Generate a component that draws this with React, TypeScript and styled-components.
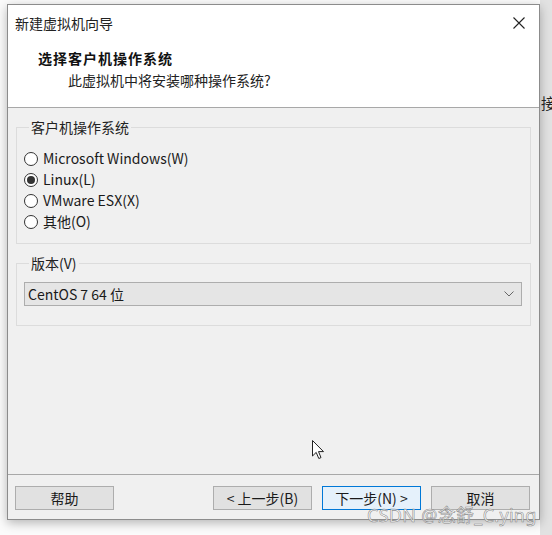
import React from "react";
import styled, { createGlobalStyle } from "styled-components";

const Global = createGlobalStyle`
  html, body { margin: 0; padding: 0; background: #fbfbfb; }
  body { font-family: "Noto Sans CJK SC", "Noto Sans", sans-serif; font-size: 14px; color: #1a1a1a; }
  * { box-sizing: border-box; }
`;

const Page = styled.div`
  position: relative;
  width: 552px;
  height: 535px;
  padding: 4px 0 0 7px;
  overflow: hidden;
  background: linear-gradient(to right, #fbfbfb 0, #fbfbfb 540px, #e2e2e2 540px);
`;

const Dialog = styled.div`
  width: 533px;
  height: 516px;
  display: flex;
  flex-direction: column;
  background: #f0f0f0;
  border: 1px solid #8c8c8c;
  box-shadow: 0 3px 10px rgba(0, 0, 0, 0.28);
`;

const TitleBar = styled.div`
  height: 36px;
  display: flex;
  align-items: center;
  justify-content: space-between;
  padding: 0 8px 0 7px;
  background: #fff;
  font-size: 14px;
  line-height: 18px;
  color: #222;
`;

const CloseBtn = styled.div`
  width: 24px;
  height: 24px;
  display: flex;
  align-items: center;
  justify-content: center;
`;

const Header = styled.div`
  background: #fff;
  padding: 7px 0 17px 30px;
  border-bottom: 1px solid #a8a8a8;
  display: flex;
  flex-direction: column;
  gap: 2px;
`;

const Heading = styled.div`
  font-weight: 700;
  font-size: 14px;
  line-height: 20px;
  letter-spacing: 1px;
  color: #111;
`;

const SubHeading = styled.div`
  padding-left: 30px;
  font-size: 14px;
  line-height: 20px;
  color: #222;
`;

const Body = styled.div`
  flex: 1;
  padding: 10px 8px 0 8px;
  display: flex;
  flex-direction: column;
  gap: 10px;
`;

const Group = styled.fieldset<{ $pb: number }>`
  margin: 0;
  padding: 0 8px ${(p) => p.$pb}px 7px;
  border: 1px solid #dcdcdc;
  min-width: 0;
`;

const Legend = styled.legend`
  padding: 0 2px;
  margin-left: 5px;
  font-size: 14px;
  line-height: 18px;
  color: #222;
`;

const RadioList = styled.div`
  padding-top: 12px;
  display: flex;
  flex-direction: column;
`;

const RadioRow = styled.label`
  height: 21px;
  display: flex;
  align-items: center;
  gap: 5px;
  font-size: 14px;
  line-height: 21px;
  color: #1a1a1a;
`;

const RadioDot = styled.span<{ $on: boolean }>`
  width: 14px;
  height: 14px;
  border-radius: 50%;
  border: 1px solid #333;
  background: #fff;
  display: flex;
  align-items: center;
  justify-content: center;
  flex-shrink: 0;
  &::after {
    content: "";
    display: ${(p) => (p.$on ? "block" : "none")};
    width: 8px;
    height: 8px;
    border-radius: 50%;
    background: #333;
  }
`;

const Select = styled.div`
  margin-top: 10px;
  height: 24px;
  display: flex;
  align-items: center;
  justify-content: space-between;
  padding: 0 7px 0 3px;
  background: #e5e5e5;
  border: 1px solid #adadad;
  font-size: 14px;
  line-height: 20px;
  color: #1a1a1a;
`;

const Footer = styled.div`
  border-top: 1px solid #a8a8a8;
  padding: 11px 9px 9px 7px;
  display: flex;
  align-items: center;
  gap: 10px;
`;

const Button = styled.div<{ $primary?: boolean; $push?: boolean }>`
  width: 99px;
  height: 24px;
  display: flex;
  align-items: center;
  justify-content: center;
  font-size: 14px;
  line-height: 20px;
  color: #1a1a1a;
  background: ${(p) => (p.$primary ? "#e5f1fb" : "#e1e1e1")};
  border: 1px solid ${(p) => (p.$primary ? "#0078d7" : "#adadad")};
  margin-right: ${(p) => (p.$push ? "auto" : "0")};
`;

const BackChar = styled.div`
  position: absolute;
  left: 541px;
  top: 93px;
  font-size: 15px;
  line-height: 20px;
  color: #222;
`;

const Watermark = styled.div`
  position: absolute;
  left: 367px;
  top: 504px;
  font-family: "Noto Sans", "Noto Sans CJK SC", sans-serif;
  font-size: 18px;
  line-height: 22px;
  letter-spacing: 0.3px;
  color: rgba(255, 255, 255, 0.75);
  -webkit-text-stroke: 0.6px rgba(120, 120, 120, 0.85);
  white-space: nowrap;
`;

const Cursor = styled.svg`
  position: absolute;
  left: 312px;
  top: 440px;
`;

const options = ["Microsoft Windows(W)", "Linux(L)", "VMware ESX(X)", "其他(O)"];

export default function App() {
  return (
    <>
      <Global />
      <Page>
        <BackChar>接</BackChar>
        <Dialog>
          <TitleBar>
            <span>新建虚拟机向导</span>
            <CloseBtn>
              <svg width="12" height="12" viewBox="0 0 12 12">
                <path d="M0.5 0.5 L11.5 11.5 M11.5 0.5 L0.5 11.5" stroke="#222" strokeWidth="1.1" />
              </svg>
            </CloseBtn>
          </TitleBar>
          <Header>
            <Heading>选择客户机操作系统</Heading>
            <SubHeading>此虚拟机中将安装哪种操作系统?</SubHeading>
          </Header>
          <Body>
            <Group $pb={11}>
              <Legend>客户机操作系统</Legend>
              <RadioList>
                {options.map((o) => (
                  <RadioRow key={o}>
                    <RadioDot $on={o === "Linux(L)"} />
                    {o}
                  </RadioRow>
                ))}
              </RadioList>
            </Group>
            <Group $pb={19}>
              <Legend>版本(V)</Legend>
              <Select>
                <span>CentOS 7 64 位</span>
                <svg width="10" height="6" viewBox="0 0 10 6">
                  <path d="M0.5 0.5 L5 5 L9.5 0.5" fill="none" stroke="#666" strokeWidth="1" />
                </svg>
              </Select>
            </Group>
          </Body>
          <Footer>
            <Button $push>帮助</Button>
            <Button>&lt; 上一步(B)</Button>
            <Button $primary>下一步(N) &gt;</Button>
            <Button>取消</Button>
          </Footer>
        </Dialog>
        <Cursor width="13" height="20" viewBox="0 0 13 20">
          <path d="M0.5 0.5 L0.5 16 L4.2 12.4 L6.8 18.5 L9 17.6 L6.5 11.6 L11.5 11.6 Z" fill="#fff" stroke="#222" strokeWidth="1" strokeLinejoin="round" />
        </Cursor>
        <Watermark>CSDN @念舒_C.ying</Watermark>
      </Page>
    </>
  );
}
